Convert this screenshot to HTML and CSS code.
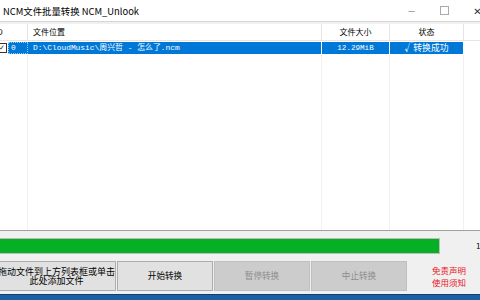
FILE: index.html
```html
<!DOCTYPE html>
<html lang="zh-CN">
<head>
    <meta charset="UTF-8">
    <title>NCM文件批量转换 NCM_Unlook</title>
    <link rel="stylesheet" href="styles.css">
</head>
<body>
    <div class="window">
        <div class="titlebar">
            <span class="title">NCM文件批量转换 NCM_Unlook</span>
            <div class="controls">
                <span class="ctl ctl-min">&#8212;</span>
                <span class="ctl ctl-max"></span>
                <span class="ctl ctl-close">&#10005;</span>
            </div>
        </div>

        <div class="list">
            <div class="list-header">
                <div class="col col-id">ID</div>
                <div class="col col-path">文件位置</div>
                <div class="col col-size">文件大小</div>
                <div class="col col-state">状态</div>
                <div class="col col-rest"></div>
            </div>
            <div class="list-body">
                <div class="list-row selected">
                    <div class="col col-id"><span class="check">&#10003;</span><span class="cell-sel">0</span></div>
                    <div class="col col-path">D:\CloudMusic\周兴哲 - 怎么了.ncm</div>
                    <div class="col col-size">12.29MiB</div>
                    <div class="col col-state">&#8730;转换成功</div>
                    <div class="col col-rest"></div>
                </div>
            </div>
        </div>

        <div class="progress-row">
            <div class="progress"><div class="progress-fill" style="width: 100%"></div></div>
            <span class="percent">100%</span>
        </div>

        <div class="button-row">
            <button class="btn btn-add">拖动文件到上方列表框或单击<br>此处添加文件</button>
            <button class="btn">开始转换</button>
            <button class="btn" disabled>暂停转换</button>
            <button class="btn" disabled>中止转换</button>
            <div class="notice">免责声明<br>使用须知</div>
        </div>
    </div>
    <div class="taskbar"></div>
</body>
</html>
```

FILE: styles.css
```css
body {
    margin: 0;
    width: 480px;
    height: 300px;
    overflow: hidden;
    background-color: #f0f0f0;
    font-family: "Noto Sans CJK SC", "DejaVu Sans", sans-serif;
    color: #000;
}
.window {
    display: flex;
    flex-direction: column;
    height: 294px;
}
.titlebar {
    height: 21px;
    background-color: #fff;
    display: flex;
    align-items: center;
    justify-content: space-between;
    border-bottom: 1px solid #d6d6d6;
}
.title {
    font-size: 9.4px;
    margin-left: 3px;
}
.controls {
    display: flex;
    align-items: center;
    margin-right: -14px;
    flex-shrink: 0;
}
.ctl {
    width: 33px;
    text-align: center;
    font-size: 10px;
    color: #333;
}
.ctl-min {
    font-size: 8px;
    color: #555;
}
.ctl-max::before {
    content: "";
    display: inline-block;
    width: 7px;
    height: 7px;
    border: 1px solid #aaa;
}

/* list view */
.list {
    margin-top: 2px;
    height: 206px;
    background-color: #fff;
    border-bottom: 1px solid #a0a0a0;
    display: flex;
    flex-direction: column;
}
.list-header,
.list-row {
    display: flex;
}
.list-header {
    height: 16px;
    align-items: center;
    font-size: 8px;
    border-bottom: 1px solid #e5e5e5;
}
.list-header .col {
    height: 16px;
    line-height: 16px;
    border-right: 1px solid #e5e5e5;
    box-sizing: border-box;
}
.col-id { width: 28px; flex-shrink: 0; }
.col-path { width: 294px; padding-left: 5px; flex-shrink: 0; }
.col-size { width: 68px; text-align: center; flex-shrink: 0; }
.col-state { width: 74px; text-align: center; flex-shrink: 0; }
.col-rest { flex: 1; border-right: none !important; }
.list-header .col-id {
    text-indent: -5px;
}
.list-body {
    flex: 1;
    padding-top: 1px;
    background-image:
        linear-gradient(#f1f1f1, #f1f1f1),
        linear-gradient(#f1f1f1, #f1f1f1),
        linear-gradient(#f1f1f1, #f1f1f1),
        linear-gradient(#f1f1f1, #f1f1f1);
    background-size: 1px 100%;
    background-repeat: no-repeat;
    background-position: 27px 0, 321px 0, 389px 0, 463px 0;
}
.list-row {
    height: 12px;
    font-family: "Liberation Mono", "Noto Sans CJK SC", monospace;
    font-size: 7.9px;
    line-height: 12px;
}
.list-row .col {
    box-sizing: border-box;
    white-space: nowrap;
}
.selected .col-path,
.selected .col-size,
.selected .col-state {
    background-color: #0078d7;
    color: #fff;
    border-right: 1px solid #fff;
}
.selected .col-size {
    font-size: 7.6px;
}
.selected .col-state {
    font-family: "Noto Sans CJK SC", sans-serif;
    font-size: 8.8px;
}
.selected .col-id {
    display: flex;
    align-items: center;
}
.check {
    width: 8px;
    height: 8px;
    border: 1px solid #333;
    margin-left: -3px;
    font-family: "DejaVu Sans", sans-serif;
    font-size: 7px;
    line-height: 8px;
    text-align: center;
    color: #222;
    background-color: #fff;
}
.cell-sel {
    flex: 1;
    height: 12px;
    margin-left: 1px;
    padding-left: 2px;
    background-color: #0078d7;
    color: #fff;
    border: 1px dotted #9cc7ee;
    box-sizing: border-box;
    line-height: 10px;
}

/* progress */
.progress-row {
    display: flex;
    align-items: center;
    height: 29px;
}
.progress {
    width: 442px;
    flex-shrink: 0;
    height: 16px;
    margin-left: -2px;
    border: 1px solid #bcbcbc;
    background-color: #e6e6e6;
    box-sizing: border-box;
}
.progress-fill {
    height: 100%;
    background-color: #06b025;
}
.percent {
    margin-left: 36px;
    font-size: 8px;
    white-space: nowrap;
}

/* buttons */
.button-row {
    display: flex;
    align-items: stretch;
    height: 30px;
    margin-top: 1px;
}
.btn {
    margin: 0 1px 0 0;
    padding: 0;
    width: 96px;
    flex-shrink: 0;
    background-color: #e1e1e1;
    border: 1px solid #adadad;
    font-family: "Noto Sans CJK SC", sans-serif;
    font-size: 8.6px;
    color: #000;
    line-height: 9.5px;
}
.btn-add {
    width: 119px;
    margin-left: -3px;
    font-size: 9px;
    white-space: nowrap;
}
.btn:disabled {
    background-color: #cccccc;
    border-color: #bfbfbf;
    color: #8c8c8c;
}
.notice {
    margin-left: 24px;
    align-self: center;
    color: #e81123;
    font-size: 8.5px;
    line-height: 12px;
    text-align: center;
}
.taskbar {
    height: 6px;
    background-color: #1d5fa3;
    border-top: 1px solid #0d3f73;
}
```
